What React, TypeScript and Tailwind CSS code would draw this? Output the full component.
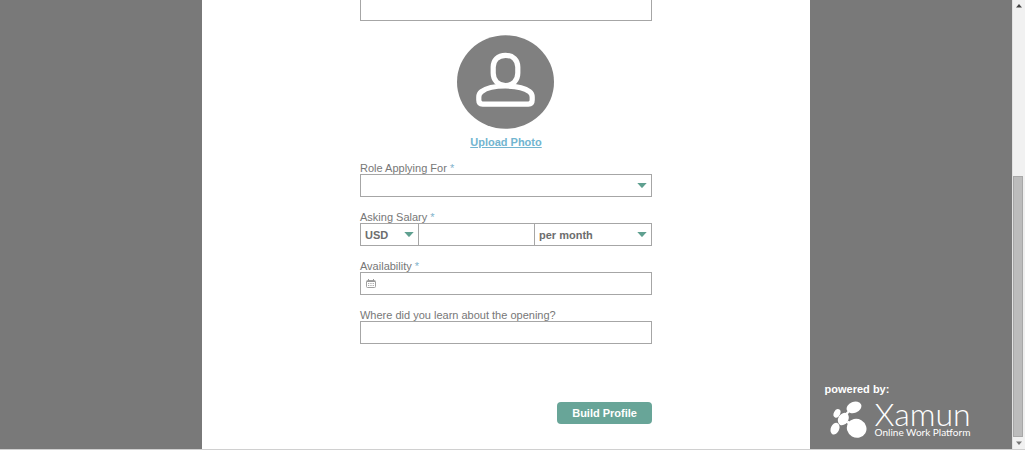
import type { ReactNode } from 'react';

const boxClass = 'block h-[23px] w-full rounded-none border border-[#a6a6a6] bg-white outline-none focus:border-[#68a598]';
const selectClass = `${boxClass} appearance-none px-1 text-[11px] leading-[14px] font-bold text-[#6d6d6d]`;

function Caret() {
  return (
    <svg className="pointer-events-none absolute top-[9px] right-[5px] h-[5px] w-[10px]" viewBox="0 0 10 5" aria-hidden="true">
      <path d="M0.3 0h9.4L5.6 4.6a0.8 0.8 0 0 1-1.2 0z" fill="#5fa090" />
    </svg>
  );
}

type FieldProps = {
  id: string;
  label: string;
  required?: boolean;
  children: ReactNode;
};

function Field({ id, label, required, children }: FieldProps) {
  return (
    <div>
      <label htmlFor={id} className="block text-[11px] leading-[12px] text-[#777]">
        {label} {required && <span className="text-[#7fb3cc]">*</span>}
      </label>
      {children}
    </div>
  );
}

function Avatar() {
  return (
    <svg className="h-[94px] w-[98px]" viewBox="0 0 98 94" aria-hidden="true">
      <ellipse cx="48.5" cy="47" rx="48.5" ry="46.8" fill="#808080" />
      <g fill="none" stroke="#fff" strokeWidth="5.2" strokeLinejoin="round">
        <path d="M48.5 20.3c-7.6 0-12.3 5-12.3 11.800v6c0 7.200 4.900 12.400 12.300 12.400s12.300-5.200 12.300-12.400v-6c0-6.800-4.700-11.800-12.300-11.800z" />
        <path d="M48.5 51c-11.500 0-20 2.500-24 5.600-2.100 1.600-2.700 3.300-2.700 5.500v3c0 2.600 1.300 4 3.800 4h45.800c2.500 0 3.800-1.400 3.800-4v-3c0-2.200-.6-3.900-2.700-5.500-4-3.100-12.500-5.600-24-5.600z" />
      </g>
    </svg>
  );
}

function CalendarIcon() {
  return (
    <svg className="pointer-events-none absolute top-[7px] left-[6px] h-[9px] w-[10px]" viewBox="0 0 10 9" aria-hidden="true">
      <rect x="0.5" y="1.5" width="9" height="7" rx="1" fill="#fff" stroke="#a0a0a0" />
      <path d="M1 2.5h8M2.5 0v2M7.5 0v2" stroke="#999" fill="none" />
      <path d="M2 4.5h6M2 6.5h6" stroke="#aaa" strokeDasharray="1.3 1" fill="none" />
    </svg>
  );
}

function Logo() {
  return (
    <div className="flex items-start gap-2">
      <svg className="h-[38px] w-[37px] shrink-0" viewBox="15 18 111 114" fill="#fff" aria-hidden="true">
        <ellipse cx="87" cy="37" rx="23" ry="16.5" transform="rotate(-22 87 37)" />
        <ellipse cx="36" cy="55" rx="9.5" ry="13.5" transform="rotate(26 36 55)" />
        <ellipse cx="55" cy="72" rx="15" ry="20" transform="rotate(32 55 72)" />
        <ellipse cx="30" cy="101" rx="12.5" ry="18.5" transform="rotate(22 30 101)" />
        <ellipse cx="95" cy="100" rx="30" ry="28" transform="rotate(30 95 100)" />
        <path d="M62 54l9-9 3 5-7 10zM62 82l9-5 5 4-3 9z" />
      </svg>
      <div className="font-[Lato,sans-serif] text-white">
        <div className="text-[32px] leading-[26px] font-light">Xamun</div>
        <div className="text-[10px] leading-[10px]">Online Work Platform</div>
      </div>
    </div>
  );
}

function ScrollRail() {
  return (
    <div className="flex w-[13px] shrink-0 flex-col border-l border-[#e2e2e2] bg-[#f1f1f1]" aria-hidden="true">
      <svg className="h-[11px] w-full shrink-0" viewBox="0 0 12 11">
        <path d="M6 4l3 3.5H3z" fill="#444" />
      </svg>
      <div className="flex-[166]" />
      <div className="mr-[2px] flex-[261] border border-[#a8a8a8] bg-[#bcbcbc]" />
      <svg className="h-[12px] w-full shrink-0" viewBox="0 0 12 12">
        <path d="M3 4.5h6L6 8z" fill="#777" />
      </svg>
    </div>
  );
}

export default function App() {
  return (
    <div className="flex min-h-screen border-b border-[#d0d0d0] bg-[#797979] font-['Liberation_Sans',Arial,sans-serif]">
      <div className="grid flex-1 grid-cols-[1fr_3fr_1fr]">
        <div />
        <main className="bg-white">
          <form className="mx-auto flex w-[292px] flex-col" onSubmit={(event) => event.preventDefault()}>
            <input type="text" aria-label="Full name" className="block h-[21px] w-full border border-t-0 border-[#a6a6a6] outline-none" />

            <div className="mt-[14px] flex flex-col items-center">
              <Avatar />
              <a href="#upload" className="mt-[6px] text-[11px] leading-[14px] font-bold text-[#72b5d0] underline">
                Upload Photo
              </a>
            </div>

            <div className="mt-[13px] flex flex-col gap-[14px]">
              <Field id="role" label="Role Applying For" required>
                <div className="relative">
                  <select id="role" className={selectClass} defaultValue="">
                    <option value="" />
                  </select>
                  <Caret />
                </div>
              </Field>

              <Field id="salary" label="Asking Salary" required>
                <div className="grid grid-cols-[59px_1fr_118px]">
                  <div className="relative">
                    <select aria-label="Currency" className={selectClass} defaultValue="USD">
                      <option>USD</option>
                    </select>
                    <Caret />
                  </div>
                  <input id="salary" type="text" className={`${boxClass} border-x-0 px-1 text-[11px]`} />
                  <div className="relative">
                    <select aria-label="Pay period" className={selectClass} defaultValue="per month">
                      <option>per month</option>
                    </select>
                    <Caret />
                  </div>
                </div>
              </Field>

              <Field id="availability" label="Availability" required>
                <div className="relative">
                  <input id="availability" type="text" className={`${boxClass} pr-1 pl-5 text-[11px]`} />
                  <CalendarIcon />
                </div>
              </Field>

              <Field id="source" label="Where did you learn about the opening?">
                <input id="source" type="text" className={`${boxClass} px-1 text-[11px]`} />
              </Field>
            </div>

            <button
              type="submit"
              className="mt-[58px] mb-6 h-[22px] self-end rounded-[4px] bg-[#68a598] px-[15px] text-[11px] leading-[14px] font-bold text-white hover:bg-[#5b968a]"
            >
              Build Profile
            </button>
          </form>
        </main>
        <aside className="flex flex-col justify-end gap-[5px] pb-[10px] pl-[15px]">
          <p className="text-[11px] leading-[14px] font-bold text-white">powered by:</p>
          <div className="pl-[5px]">
            <Logo />
          </div>
        </aside>
      </div>
      <ScrollRail />
    </div>
  );
}
